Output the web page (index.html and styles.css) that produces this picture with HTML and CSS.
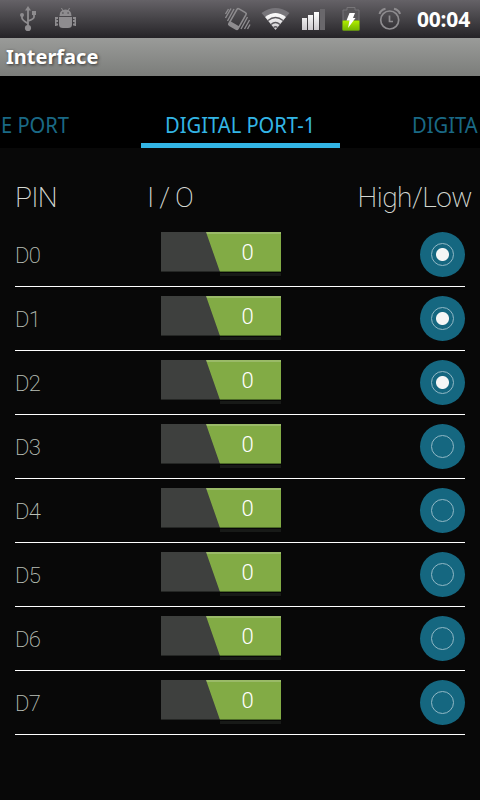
FILE: index.html
```html
<!DOCTYPE html>
<html lang="en">
<head>
<meta charset="utf-8">
<title>Interface</title>
<link rel="stylesheet" href="styles.css">
</head>
<body>
<header class="status">
  <svg class="status-icons" width="412" height="38" viewBox="0 0 412 38">
    <defs>
      <linearGradient id="white" x1="0" y1="0" x2="0" y2="1"><stop offset="0" stop-color="#fff"/><stop offset="1" stop-color="#ccc9cd"/></linearGradient>
      <linearGradient id="green" x1="0" y1="0" x2="0" y2="1"><stop offset="0" stop-color="#b2ee00"/><stop offset="1" stop-color="#74b500"/></linearGradient>
    </defs>
    <g fill="#8e8c8f" stroke="#8e8c8f">
      <path d="M28 9V27M22 16v2q0 2 6 5.500M34 14v3q0 2-6 4" fill="none" stroke-width="1.800"/>
      <path d="M28 6l3 4.500h-6z" stroke="none"/><circle cx="28" cy="28" r="3.100" stroke="none"/><circle cx="22" cy="15" r="2" stroke="none"/><path d="M32 11h4v4h-4z" stroke="none"/>
    </g>
    <g fill="#8e8c8f">
      <path d="M59.500 16q0-6.500 6-6.500t6 6.500zM59 17h13v7.500q0 3.500-4 3.500h-5q-4 0-4-3.500z"/>
      <path d="M61.500 8l1.500 3M69.500 8l-1.500 3" stroke="#8e8c8f" stroke-width="1" fill="none"/>
      <path d="M55 17h3v2h-3zM55 20h3v2h-3zM55 23.500h3v2h-3zM55 17h1.500v9H55zM73 17h3v2h-3zM73 20h3v2h-3zM73 23.500h3v2h-3zM74.500 17H76v9h-1.500z"/>
      <circle cx="62.900" cy="13" r=".8" fill="#48464a"/><circle cx="68.100" cy="13" r=".8" fill="#48464a"/>
    </g>
    <g fill="none" stroke="#8e8c8f">
      <g transform="rotate(30 237.500 19)"><rect x="232.300" y="9.500" width="10.400" height="19" rx="1.500" stroke-width="1.600"/><path d="M232 26.500h11" stroke-width="4"/></g>
      <path d="M234 9l-6.500 12M231 8.500l-5.500 9.500M228.500 9l-3 5M247.500 17l-6.500 12M249.500 20l-5 9M250 24.500l-2.500 4.500" stroke-width="1.400"/>
    </g>
    <path d="M261.500 13Q275.500 3 289.500 13L286 17Q275.500 9 265 17z" fill="#77757a"/>
    <path d="M265 17Q275.500 9 286 17L275.500 30z" fill="url(#white)"/>
    <path d="M268 20.500q7.500-6 15 0M271 24.500q4.500-4 9 0M273.500 27.500q2-1.500 4 0" fill="none" stroke="#5b595d" stroke-width="1.300"/>
    <path d="M302 18h5v12h-5zM308 15h5v15h-5zM314 12h5v18h-5z" fill="url(#white)"/>
    <path d="M320 9h5v21h-5z" fill="#69676b"/>
    <path d="M343 10h4V7.500h8V10h4v11h-16z" fill="#59575a" stroke="#777578"/>
    <rect x="342.500" y="20.500" width="17" height="10" rx="1" fill="url(#green)" stroke="#6d9c12" stroke-width=".6"/>
    <path d="M349.500 13h5.500l-2 5h2.500l-7.500 10 1.500-7.500h-3z" fill="#fff"/>
    <g fill="none" stroke="#8e8c8f" stroke-width="1.700"><circle cx="389.700" cy="20" r="9"/><path d="M389.500 15.500V21.500h3.500"/><path d="M379.500 14q1-4 6-5.200M400 14q-1-4-6-5.200" stroke-width="2"/></g>
  </svg>
  <span class="clock">00:04</span>
</header>
<h1 class="title">Interface</h1>
<nav class="tabs">
  <span class="tab tab-prev"><span class="label">E PORT</span></span>
  <span class="tab tab-active"><span class="label">DIGITAL PORT-1</span></span>
  <span class="tab tab-next"><span class="label">DIGITA</span></span>
</nav>
<main>
  <div class="heads"><span class="pin-head">PIN</span><span class="io-head">I / O</span><span class="level-head">High/Low</span></div>
  <div class="row"><span class="pin">D0</span><div class="toggle"><div class="thumb"><span>0</span></div></div><div class="level on"><i></i></div></div>
  <div class="row"><span class="pin">D1</span><div class="toggle"><div class="thumb"><span>0</span></div></div><div class="level on"><i></i></div></div>
  <div class="row"><span class="pin">D2</span><div class="toggle"><div class="thumb"><span>0</span></div></div><div class="level on"><i></i></div></div>
  <div class="row"><span class="pin">D3</span><div class="toggle"><div class="thumb"><span>0</span></div></div><div class="level"><i></i></div></div>
  <div class="row"><span class="pin">D4</span><div class="toggle"><div class="thumb"><span>0</span></div></div><div class="level"><i></i></div></div>
  <div class="row"><span class="pin">D5</span><div class="toggle"><div class="thumb"><span>0</span></div></div><div class="level"><i></i></div></div>
  <div class="row"><span class="pin">D6</span><div class="toggle"><div class="thumb"><span>0</span></div></div><div class="level"><i></i></div></div>
  <div class="row"><span class="pin">D7</span><div class="toggle"><div class="thumb"><span>0</span></div></div><div class="level"><i></i></div></div>
</main>
</body>
</html>
```
FILE: styles.css
```css
* { box-sizing: border-box; }
body { margin: 0; width: 480px; height: 800px; overflow: hidden; background: #080808; color: #d4d8d2; font-family: Roboto, sans-serif; }
.status { height: 38px; display: flex; background: linear-gradient(#656267, #454347 50%, #252327); }
.status-icons { flex: none; }
.clock { margin-left: 5px; font: 700 21px/39px "Noto Sans", sans-serif; color: #fff; letter-spacing: -.2px; }
.title { margin: 0; height: 38px; padding-left: 6px; background: linear-gradient(#9a9b99, #7b7d7a); color: #fff; font: 700 20px/37px "Noto Sans", sans-serif; text-shadow: 1px 1px 3px #333; }
.tabs { height: 72px; display: grid; grid-template-columns: 141px 199px 140px; background: #000; color: #1a6985; font: 400 22px/30px "Noto Sans", sans-serif; white-space: nowrap; }
.tab { padding-top: 33px; height: 72px; }
.label { display: inline-block; transform: scaleX(.915); transform-origin: left; }
.tab-prev { padding-left: 1px; }
.tab-active { padding-left: 24px; color: #33b5e5; border-bottom: 5px solid #33b5e5; }
.tab-next { padding-left: 72px; }
.heads { height: 75px; padding: 32px 8px 0 15px; display: grid; grid-template-columns: 132px 1fr auto; font-size: 28px; line-height: 36px; font-weight: 200; }
.pin-head { letter-spacing: -.8px; }
.io-head { letter-spacing: -.9px; }
.level-head { letter-spacing: -.5px; }
.row { height: 64px; margin: 0 15px; border-bottom: 1px solid #fff; display: grid; grid-template-columns: 146px 1fr 45px; padding-top: 9px; }
.pin { font-size: 22px; line-height: 48px; font-weight: 200; color: #bac0b8; letter-spacing: -.7px; }
.toggle { width: 120px; height: 40px; background: #3e403e; border-bottom: 1px solid #252725; display: flex; justify-content: flex-end; }
.thumb { width: 75px; height: 44px; padding-left: 8px; text-align: center; color: #fff; font-size: 22px; line-height: 41px; font-weight: 300; background: linear-gradient(#9aba68 0 2px, #82ab45 2px 39px, #4c6b27 39px 40px, #080808 40px 41px, #181a18 41px); clip-path: polygon(0 0, 100% 0, 100% 100%, 14px 100%, 14px 40px); }
.thumb span { display: inline-block; }
.level { width: 45px; height: 45px; border-radius: 50%; background: #156780; display: grid; place-items: center; }
.level i { width: 23px; height: 23px; border: 1px solid #91b8c5; border-radius: 50%; }
.level.on i { background: radial-gradient(circle, #f5f6f6 0 6px, #156780 7px); }
```
